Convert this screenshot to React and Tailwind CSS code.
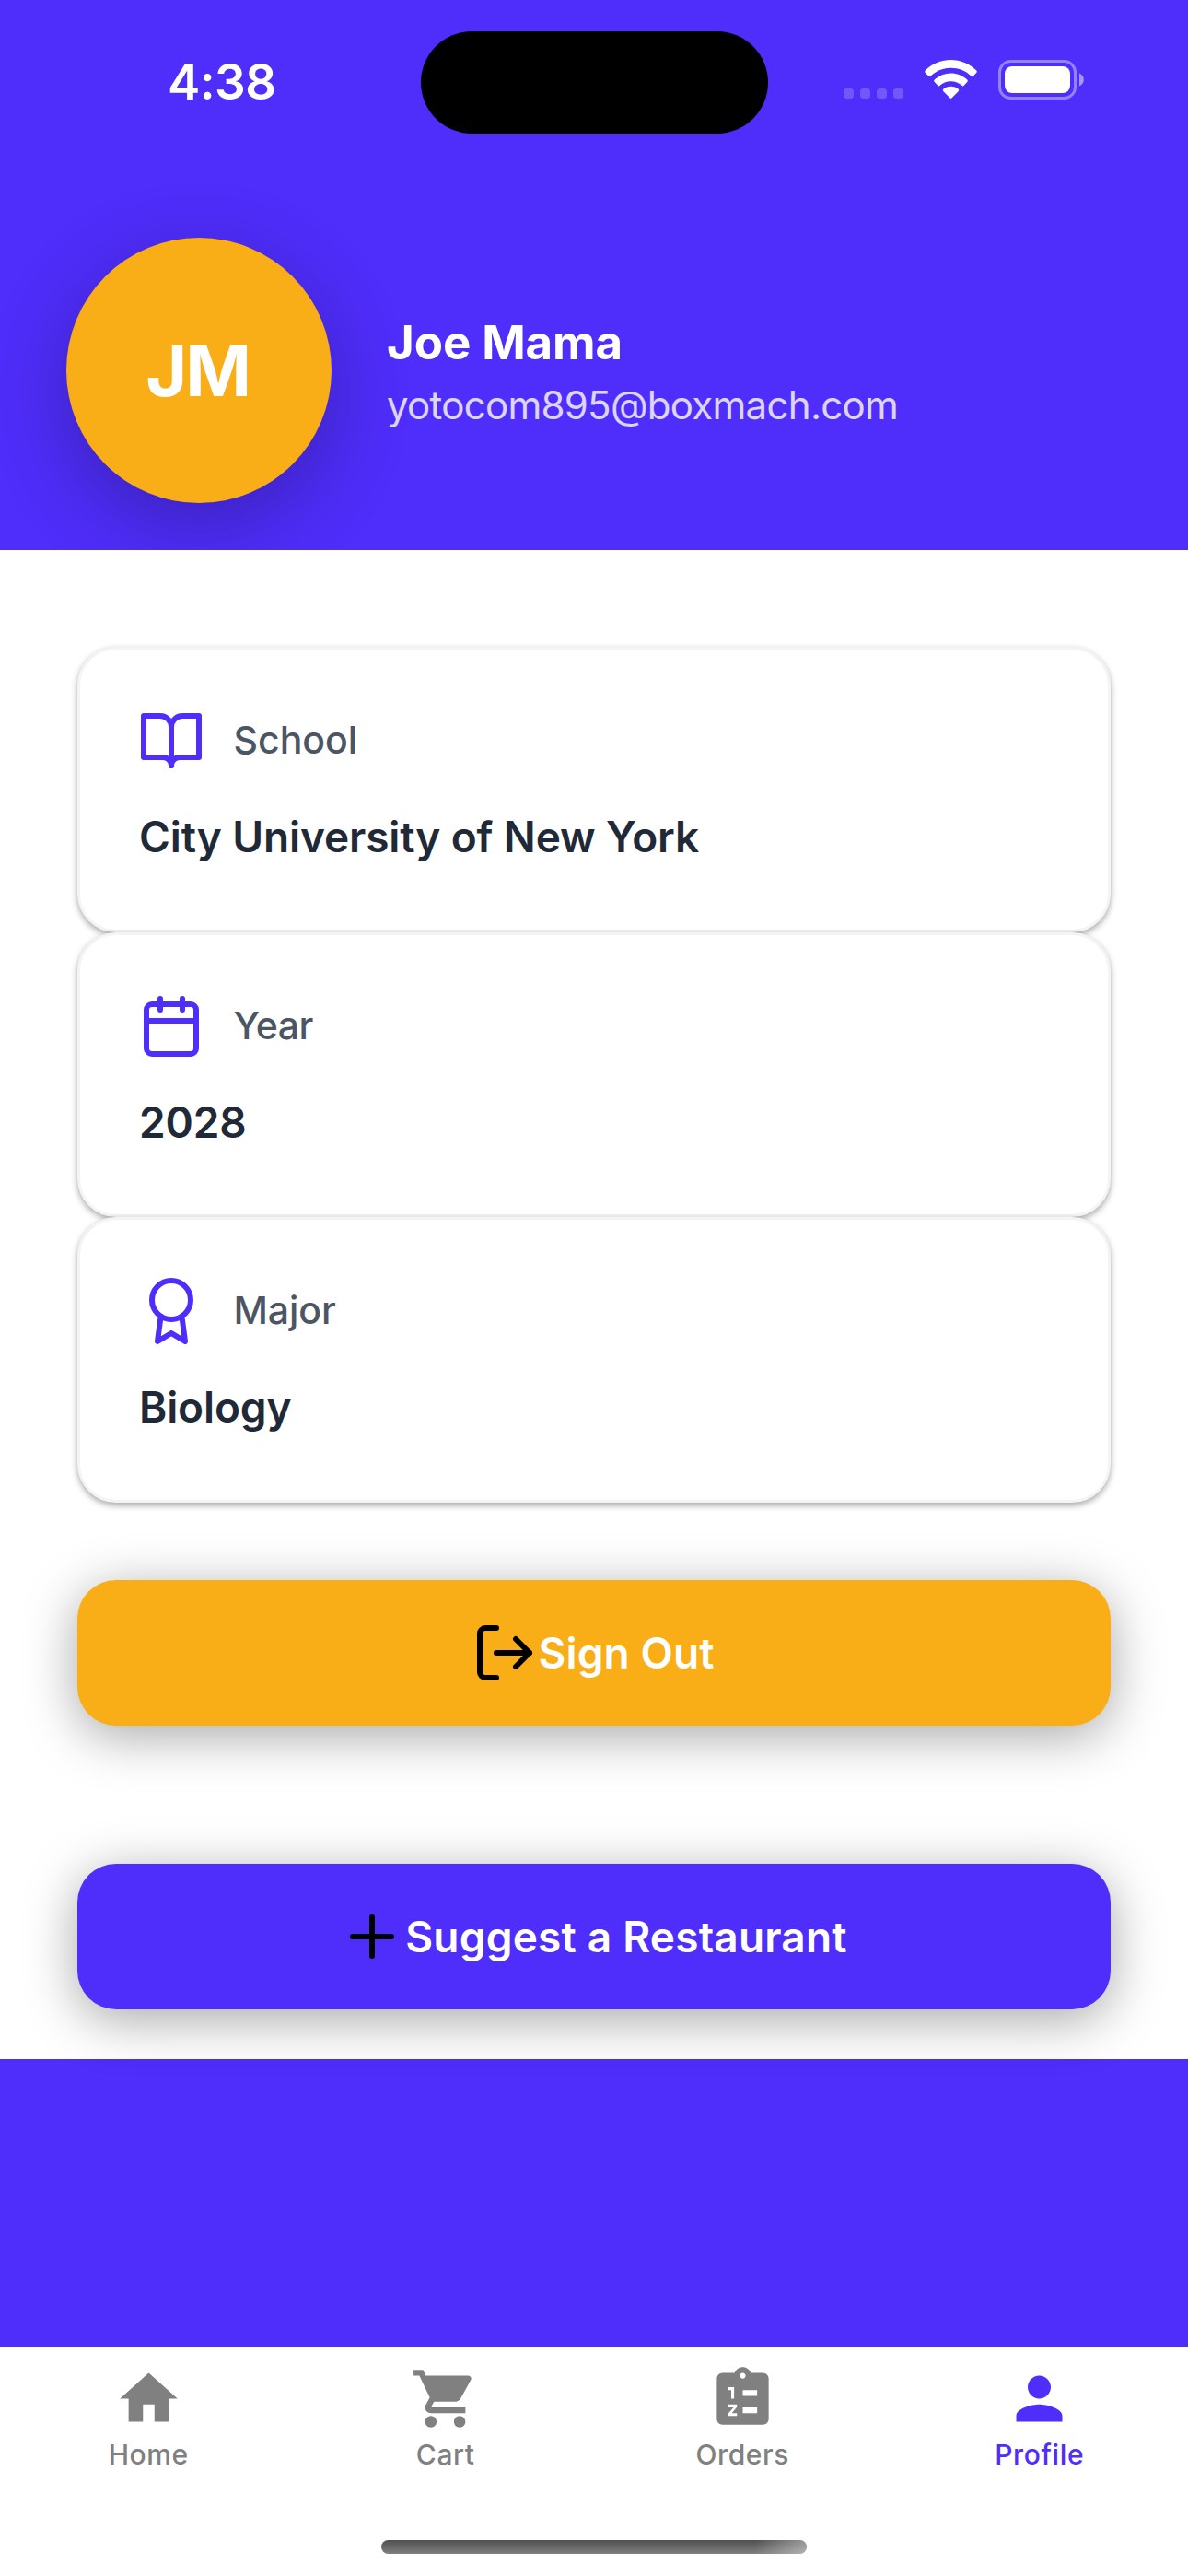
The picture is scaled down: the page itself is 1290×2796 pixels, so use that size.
import React from "react";
import { FiAward, FiBookOpen, FiCalendar, FiLogOut, FiPlus } from "react-icons/fi";
import { MdHome, MdPerson, MdShoppingCart } from "react-icons/md";

function WifiIcon() {
  return (
    <svg width="57" height="43" viewBox="0 0 57 43" fill="#fff">
      <path d="M28.5 0C39 0 48.600 4.200 56 11.200Q57.500 12.600 56.200 14L52.600 17.700Q51.700 18.600 50.800 17.700C44.700 12 37 8.800 28.500 8.800S12.300 12 6.200 17.700Q5.300 18.600 4.400 17.700L.8 14Q-.5 12.600 1 11.200C8.400 4.200 18 0 28.500 0Z" />
      <path d="M28.500 14.500C35.200 14.500 41.200 17 46 21.300Q47.500 22.700 46.200 24.100L42.500 27.900Q41.600 28.800 40.700 28C37.400 25 33.200 23.300 28.500 23.300S19.600 25 16.300 28Q15.400 28.800 14.500 27.900L10.800 24.100Q9.500 22.700 11 21.300C15.800 17 21.800 14.500 28.500 14.500Z" />
      <path d="M28.500 28.800C31.600 28.800 34.400 29.800 36.500 31.600Q37.900 32.900 36.600 34.200L29.600 41.300Q28.500 42.400 27.400 41.300L20.400 34.200Q19.100 32.900 20.500 31.600C22.600 29.800 25.400 28.800 28.500 28.800Z" />
    </svg>
  );
}

function BatteryIcon() {
  return (
    <svg width="93" height="43" viewBox="0 0 93 43" fill="none">
      <rect x="1.500" y="1.500" width="82" height="40" rx="12" stroke="#fff" strokeOpacity=".4" strokeWidth="3" />
      <rect x="7" y="7" width="71" height="29" rx="8" fill="#fff" />
      <path d="M88 14.500C91 15.700 92.800 18.400 92.800 21.500S91 27.300 88 28.500Z" fill="#fff" fillOpacity=".5" />
    </svg>
  );
}

function OrdersIcon({ size }) {
  return (
    <svg width={size} height={size} viewBox="0 0 24 24" fill="currentColor" fillRule="evenodd">
      <path d="M19 3h-4.180C14.400 1.840 13.300 1 12 1s-2.400.84-2.820 2H5c-1.100 0-2 .9-2 2v14c0 1.100.9 2 2 2h14c1.100 0 2-.9 2-2V5c0-1.100-.9-2-2-2zM12 3c.55 0 1 .45 1 1s-.45 1-1 1-1-.45-1-1 .45-1 1-1zM7 8h2v4H8V9H7zM12 9h5v2h-5zM7 14h3v.9L8.200 17H10v1H7v-.9L8.800 15H7zM12 15h5v2h-5z" />
    </svg>
  );
}

function StatusBar() {
  return (
    <div className="flex h-[178px] items-center pl-[182px]">
      <div className="w-[275px] text-[53px] leading-none font-semibold tracking-[-0.54px] text-white">4:38</div>
      <div className="h-[111px] w-[377px] rounded-full bg-black" />
      <div className="ml-[82px] flex gap-[7px] pt-[25px]">
        {[0, 1, 2, 3].map((dot) => (
          <span key={dot} className="size-[11px] rounded-[3.500px] bg-white/20" />
        ))}
      </div>
      <div className="ml-[23px] flex gap-[23px] pb-[5px]">
        <WifiIcon />
        <BatteryIcon />
      </div>
    </div>
  );
}

const details = [
  { icon: FiBookOpen, label: "School", value: "City University of New York", height: "h-[310px]", labelGap: "tracking-[0px]" },
  { icon: FiCalendar, label: "Year", value: "2028", height: "h-[309px]", labelGap: "tracking-[-0.6px]" },
  { icon: FiAward, label: "Major", value: "Biology", height: "h-[310px]", labelGap: "tracking-[-0.1px]" },
];

function DetailCard({ icon: Icon, label, value, height, labelGap }) {
  return (
    <div
      className={`${height} rounded-[42px] border-[3px] border-gray-100 bg-white p-[63px] shadow-[0_3px_7px_rgba(0,0,0,0.35)]`}
    >
      <div className="mb-[31.5px] flex h-[72px] items-center">
        <Icon size={72} className="text-[#4f2dfa]" />
        <span className={`ml-[31.5px] text-[41px] font-medium text-[#4b5563] ${labelGap}`}>{label}</span>
      </div>
      <div className="pl-px text-[46px] leading-[73.5px] font-semibold tracking-[-0.12px] text-[#1f2937]">{value}</div>
    </div>
  );
}

function ActionButton({ icon: Icon, children, className }) {
  return (
    <button
      className={`flex h-[158px] w-full items-center justify-center rounded-[42px] pr-[2px] text-[46px] font-semibold text-white shadow-[0_11px_56px_rgba(0,0,0,0.35)] ${className}`}
    >
      <Icon size={72} className="text-black" />
      <span>{children}</span>
    </button>
  );
}

const tabs = [
  { icon: MdHome, label: "Home", color: "text-[#808080]" },
  { icon: MdShoppingCart, label: "Cart", color: "text-[#808080]" },
  { icon: OrdersIcon, label: "Orders", color: "text-[#808080]" },
  { icon: MdPerson, label: "Profile", color: "text-[#4f2dfa]" },
];

function TabBar() {
  return (
    <nav className="flex h-[249px] flex-col items-center bg-white pt-[19px]">
      <div className="grid w-full grid-cols-4">
        {tabs.map(({ icon: Icon, label, color }) => (
          <div key={label} className={`flex flex-col items-center ${color}`}>
            <Icon size={75} />
            <span className="mt-[3px] text-[30px] leading-[40px] font-medium tracking-[0.63px]">{label}</span>
          </div>
        ))}
      </div>
      <div className="mt-[73px] h-[15px] w-[462px] overflow-hidden rounded-full bg-linear-to-b from-[#505050] to-[#808080]">
        <div className="ml-auto h-full w-[56px] bg-linear-to-r from-transparent to-white/40" />
      </div>
    </nav>
  );
}

export default function App() {
  return (
    <div className="flex h-[2796px] w-[1290px] flex-col bg-[#4f2dfa] font-['Inter',sans-serif]">
      <header className="h-[597px] shrink-0 overflow-hidden">
        <StatusBar />
        <div className="mt-[80px] flex items-center px-[72px]">
          <div className="flex size-[288px] shrink-0 items-center justify-center rounded-full bg-[#f9ad16] pt-[2px] pr-[3px] text-[77px] font-bold tracking-[-2px] text-white shadow-[0_24px_84px_rgba(0,0,0,0.25)]">
            JM
          </div>
          <div className="ml-[60px] pt-[2px]">
            <div className="text-[51px] leading-[73.5px] font-bold tracking-[-0.1px] text-white">Joe Mama</div>
            <div className="text-[42px] leading-[63px] tracking-[-0.71px] text-white/80">yotocom895@boxmach.com</div>
          </div>
        </div>
      </header>
      <main className="h-[1638px] shrink-0 bg-white px-[84px] pt-[105px]">
        <div className="flex flex-col">
          {details.map((detail) => (
            <DetailCard key={detail.label} {...detail} />
          ))}
        </div>
        <ActionButton icon={FiLogOut} className="mt-[84px] bg-[#f9ad16] tracking-[0.1px]">
          Sign Out
        </ActionButton>
        <ActionButton icon={FiPlus} className="mt-[150px] bg-[#4f2dfa] tracking-[0.2px]">
          Suggest a Restaurant
        </ActionButton>
      </main>
      <div className="grow" />
      <TabBar />
    </div>
  );
}
